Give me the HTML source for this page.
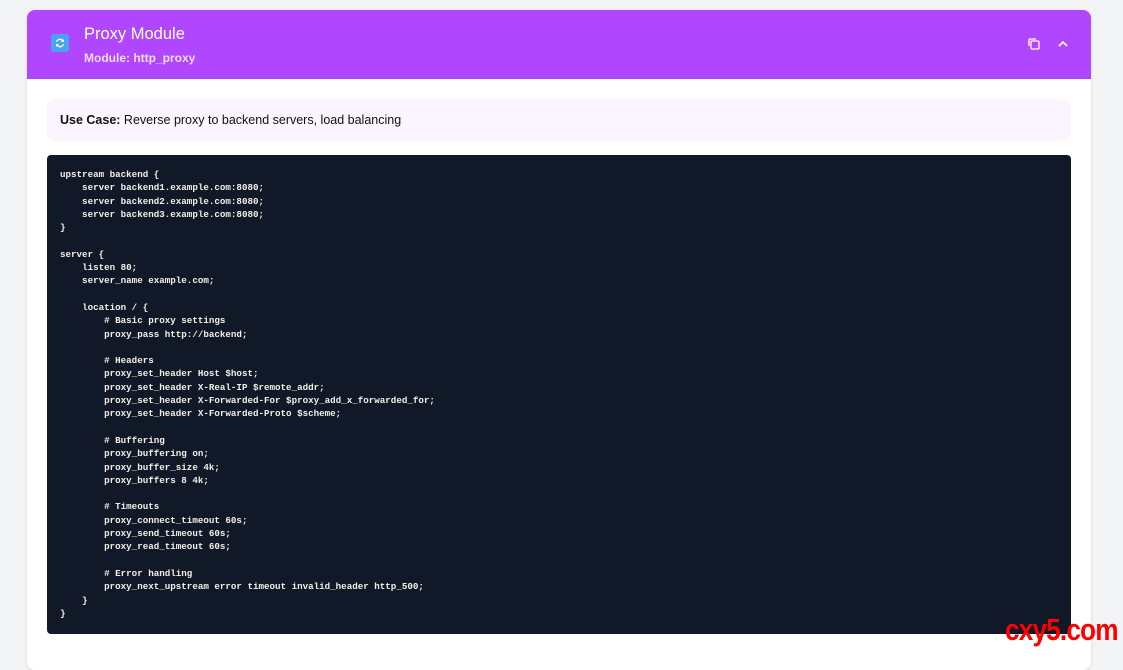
<!DOCTYPE html>
<html><head><meta charset="utf-8"><style>
*{margin:0;padding:0;box-sizing:border-box}
body{width:1123px;height:651px;background:#f3f4f6;font-family:"Liberation Sans",sans-serif;overflow:hidden;position:relative}
.card{position:absolute;left:27px;top:10px;width:1064px;height:660px;background:#fff;border-radius:8px;overflow:hidden;box-shadow:0 1px 3px rgba(0,0,0,.12)}
.hd{height:69px;background:#b146ff;position:relative;color:#fff}
.ic{position:absolute;left:24px;top:24px;width:18px;height:18px;border-radius:3px;background:#4aa3f0}
.t1{position:absolute;left:57px;top:15px;font-size:16.5px}
.t2{position:absolute;left:57px;top:41px;font-size:12px;font-weight:bold;color:#f0dcff}
.uc{position:absolute;left:20px;top:89px;width:1024px;height:42px;background:#faf5ff;border-radius:8px;font-size:12.5px;padding:14px 13px;color:#111}
.code{position:absolute;left:20px;top:145px;width:1024px;height:479px;background:#111827;border-radius:4px;padding:13px 13px;color:#f3f0e6;font-family:"Liberation Mono",monospace;font-size:9.2px;line-height:13.3px;white-space:pre;font-weight:bold}
.wm{position:absolute;left:1005px;top:612px;color:#f00;font-family:"Liberation Sans",sans-serif;font-weight:bold;font-size:31px;letter-spacing:-1px;transform:scaleX(.845);transform-origin:left}
</style></head><body>
<div class="card">
<div class="hd">
<div class="ic"><svg width="18" height="18" viewBox="0 0 18 18"><path d="M5 8a4 4 0 0 1 7-2l1-1v3h-3l1-1a3 3 0 0 0-5 1z M13 10a4 4 0 0 1-7 2l-1 1v-3h3l-1 1a3 3 0 0 0 5-1z" fill="#fff"/></svg></div>
<div class="t1">Proxy Module</div>
<div class="t2">Module: http_proxy</div>
<svg style="position:absolute;left:1000px;top:27px" width="14" height="14" viewBox="0 0 14 14" fill="none" stroke="#fff" stroke-width="1.3"><rect x="4" y="4" width="8" height="8" rx="1"/><path d="M2 9V3a1 1 0 0 1 1-1h6"/></svg>
<svg style="position:absolute;left:1030px;top:29px" width="12" height="10" viewBox="0 0 12 10" fill="none" stroke="#fff" stroke-width="1.6"><path d="M2 7l4-4 4 4"/></svg>
</div>
<div class="uc"><b>Use Case:</b> Reverse proxy to backend servers, load balancing</div>
<div class="code">upstream backend {
    server backend1.example.com:8080;
    server backend2.example.com:8080;
    server backend3.example.com:8080;
}

server {
    listen 80;
    server_name example.com;

    location / {
        # Basic proxy settings
        proxy_pass http://backend;

        # Headers
        proxy_set_header Host $host;
        proxy_set_header X-Real-IP $remote_addr;
        proxy_set_header X-Forwarded-For $proxy_add_x_forwarded_for;
        proxy_set_header X-Forwarded-Proto $scheme;

        # Buffering
        proxy_buffering on;
        proxy_buffer_size 4k;
        proxy_buffers 8 4k;

        # Timeouts
        proxy_connect_timeout 60s;
        proxy_send_timeout 60s;
        proxy_read_timeout 60s;

        # Error handling
        proxy_next_upstream error timeout invalid_header http_500;
    }
}</div>
</div>
<div class="wm">cxy5.com</div>
</body></html>
